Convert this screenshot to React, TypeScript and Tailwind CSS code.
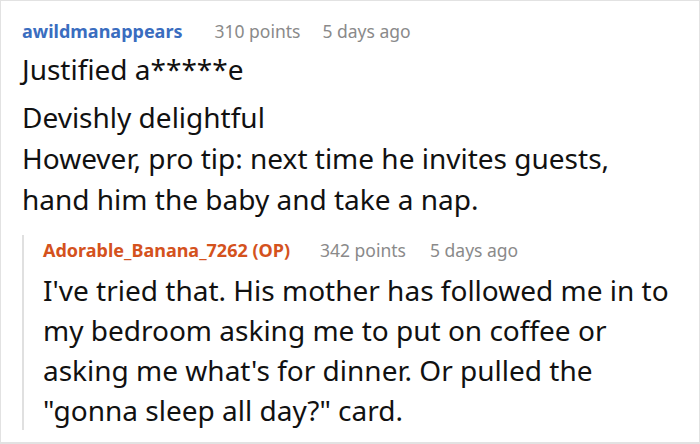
import React from "react";

export default function App() {
  return (
    <div className="w-[700px] h-[444px] overflow-hidden bg-white border border-[#e2e2e2] border-b-2 font-['Noto_Sans',sans-serif]">
      <div className="pl-[21px] pt-[15px]">
        <div className="flex items-baseline leading-[30px]">
          <span className="text-[18px] font-bold text-[#3a6dbf]">awildmanappears</span>
          <span className="ml-[32px] text-[17.5px] text-[#8a8a8a]">310 points</span>
          <span className="ml-[22px] text-[17.5px] text-[#8a8a8a]">5 days ago</span>
        </div>
        <div className="mt-[3px] text-[28px] leading-[40px] text-[#111]">Justified a*****e</div>
        <div className="mt-[8px] text-[28px] leading-[41px] text-[#111]">
          <div>Devishly delightful</div>
          <div>However, pro tip: next time he invites guests,</div>
          <div>hand him the baby and take a nap.</div>
        </div>
        <div className="mt-[15px] border-l-2 border-[#e0e0e0] pl-[19px]">
          <div className="flex items-baseline leading-[30px]">
            <span className="text-[18px] font-bold text-[#d4521d]">Adorable_Banana_7262 (OP)</span>
            <span className="ml-[30px] text-[17.5px] text-[#8a8a8a]">342 points</span>
            <span className="ml-[24px] text-[17.5px] text-[#8a8a8a]">5 days ago</span>
          </div>
          <div className="mt-[5px] text-[28px] leading-[40px] text-[#111]">
            <div>I've tried that. His mother has followed me in to</div>
            <div>my bedroom asking me to put on coffee or</div>
            <div>asking me what's for dinner. Or pulled the</div>
            <div>"gonna sleep all day?" card.</div>
          </div>
        </div>
      </div>
    </div>
  );
}
